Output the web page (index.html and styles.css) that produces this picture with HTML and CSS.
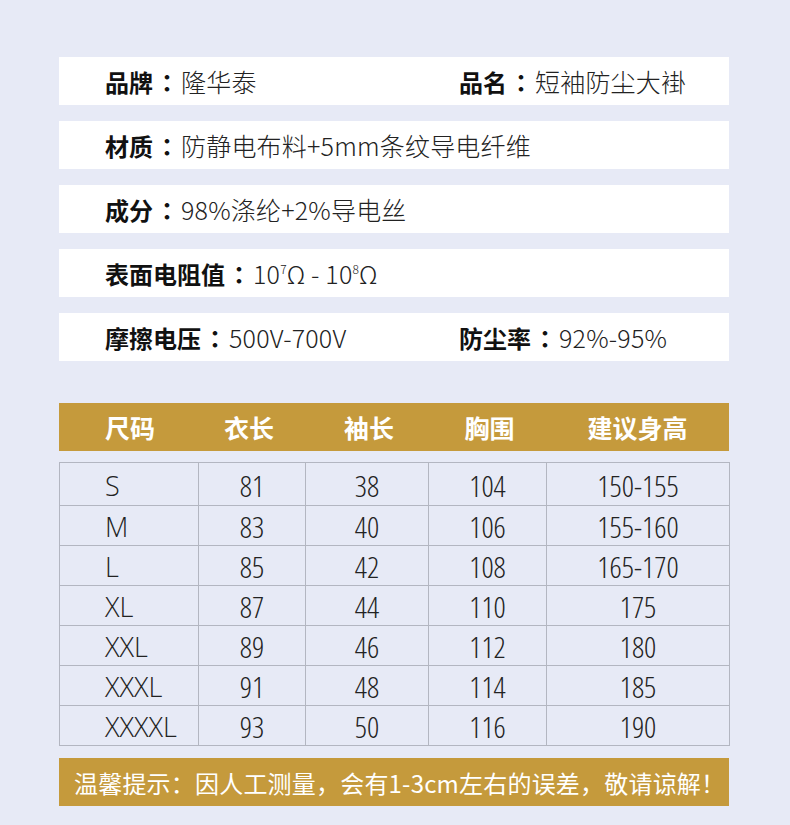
FILE: index.html
```html
<!DOCTYPE html>
<html lang="zh">
<head>
<meta charset="utf-8">
<link rel="stylesheet" href="styles.css">
</head>
<body>
<div class="page">
  <div class="info">
    <div class="bar">
      <div class="item"><span class="label">品牌</span><span class="colon">：</span><span class="val">隆华泰</span></div>
      <div class="item"><span class="label">品名</span><span class="colon">：</span><span class="val">短袖防尘大褂</span></div>
    </div>
    <div class="bar">
      <div class="item wide"><span class="label">材质</span><span class="colon">：</span><span class="val">防静电布料+5mm条纹导电纤维</span></div>
    </div>
    <div class="bar">
      <div class="item wide"><span class="label">成分</span><span class="colon">：</span><span class="val">98%涤纶+2%导电丝</span></div>
    </div>
    <div class="bar">
      <div class="item wide"><span class="label">表面电阻值</span><span class="colon">：</span><span class="val">10<sup>7</sup>Ω - 10<sup>8</sup>Ω</span></div>
    </div>
    <div class="bar">
      <div class="item"><span class="label">摩擦电压</span><span class="colon">：</span><span class="val">500V-700V</span></div>
      <div class="item"><span class="label">防尘率</span><span class="colon">：</span><span class="val">92%-95%</span></div>
    </div>
  </div>

  <div class="thead">
    <div class="th c1">尺码</div>
    <div class="th c2">衣长</div>
    <div class="th c3">袖长</div>
    <div class="th c4">胸围</div>
    <div class="th c5">建议身高</div>
  </div>

  <table class="size">
    <tr class="r1"><td class="first">S</td><td>81</td><td>38</td><td>104</td><td>150-155</td></tr>
    <tr><td class="first">M</td><td>83</td><td>40</td><td>106</td><td>155-160</td></tr>
    <tr><td class="first">L</td><td>85</td><td>42</td><td>108</td><td>165-170</td></tr>
    <tr><td class="first">XL</td><td>87</td><td>44</td><td>110</td><td>175</td></tr>
    <tr><td class="first">XXL</td><td>89</td><td>46</td><td>112</td><td>180</td></tr>
    <tr><td class="first">XXXL</td><td>91</td><td>48</td><td>114</td><td>185</td></tr>
    <tr><td class="first">XXXXL</td><td>93</td><td>50</td><td>116</td><td>190</td></tr>
  </table>

  <div class="tip">温馨提示：因人工测量，会有1-3cm左右的误差，敬请谅解！</div>
</div>
</body>
</html>
```

FILE: styles.css
```css
* { box-sizing: border-box; }
html, body {
  margin: 0;
  padding: 0;
  background: #e7eaf6;
}
body {
  font-family: "Noto Sans CJK SC", "Noto Sans", sans-serif;
  color: #1a1a1a;
  width: 790px;
  height: 825px;
  overflow: hidden;
}
.page {
  padding: 57px 61px 0 59px;
}
.info {
  display: flex;
  flex-direction: column;
  gap: 16px;
}
.bar {
  height: 48px;
  background: #ffffff;
  display: grid;
  grid-template-columns: 354px 1fr;
  align-items: center;
  padding-left: 46px;
}
.item {
  display: flex;
  align-items: baseline;
  white-space: nowrap;
  line-height: 1;
}
.item.wide { grid-column: 1 / 3; }
.label {
  font-size: 24px;
  font-weight: 700;
  color: #111;
}
.colon {
  font-family: "Noto Sans CJK TC", "Noto Sans CJK SC", sans-serif;
  font-size: 24px;
  font-weight: 700;
  color: #111;
  width: 28px;
  text-align: center;
}
.val {
  font-size: 25px;
  font-weight: 300;
  color: #222;
  letter-spacing: 0.2px;
}
.val sup {
  font-size: 12px;
  vertical-align: 10px;
  line-height: 0;
}
.thead {
  margin-top: 42px;
  height: 48px;
  background: #c59a3c;
  display: grid;
  grid-template-columns: 139px 107px 123px 118px 183px;
  align-items: center;
  color: #fff;
  font-weight: 700;
  font-size: 25px;
  line-height: 1;
}
.th { text-align: center; }
.th.c1 { text-align: left; padding-left: 46px; }
.th.c2 { padding-right: 5px; }
.th.c3 { padding-left: 5px; }
.th.c4 { padding-left: 5px; }
.size {
  margin-top: 11px;
  width: 670px;
  border-collapse: collapse;
  table-layout: fixed;
}
.size td {
  border: 1px solid #b3b6c1;
  height: 40px;
  padding: 3px 0 0;
  text-align: center;
  font-family: "Open Sans", "Noto Sans", sans-serif;
  font-weight: 300;
  font-stretch: 75%;
  font-size: 30px;
  color: #222;
  line-height: 1;
}
.size tr.r1 td { height: 43px; }
.size td:nth-child(1) { width: 139px; }
.size td:nth-child(2) { width: 107px; }
.size td:nth-child(3) { width: 123px; }
.size td:nth-child(4) { width: 118px; }
.size td:nth-child(5) { width: 183px; }
.size td.first {
  text-align: left;
  padding-left: 45px;
  font-stretch: 100%;
  font-size: 27px;
  padding-top: 2px;
}
.tip {
  margin-top: 12px;
  height: 48px;
  background: #c59a3c;
  color: #fff;
  font-size: 24px;
  display: flex;
  align-items: center;
  padding-left: 15px;
  white-space: nowrap;
  letter-spacing: 0.2px;
}
```
